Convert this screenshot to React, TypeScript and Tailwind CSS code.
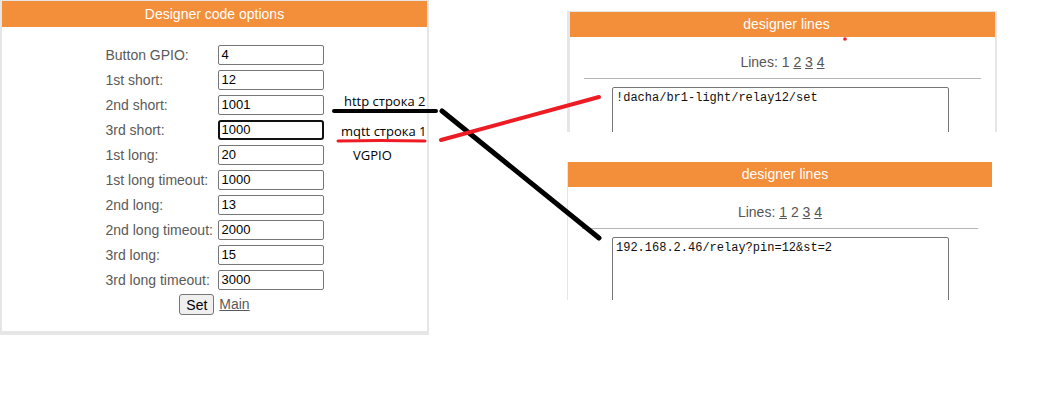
import React from "react";

const ORANGE = "bg-[#f38e3a]";

const FIELDS: { label: string; value: string; focused?: boolean }[] = [
  { label: "Button GPIO:", value: "4" },
  { label: "1st short:", value: "12" },
  { label: "2nd short:", value: "1001" },
  { label: "3rd short:", value: "1000", focused: true },
  { label: "1st long:", value: "20" },
  { label: "1st long timeout:", value: "1000" },
  { label: "2nd long:", value: "13" },
  { label: "2nd long timeout:", value: "2000" },
  { label: "3rd long:", value: "15" },
  { label: "3rd long timeout:", value: "3000" },
];

function LinesNav({ current }: { current: number }) {
  return (
    <p className="text-center text-[14px] leading-[16px] text-[#555]">
      Lines:{" "}
      {[1, 2, 3, 4].map((n) => (
        <React.Fragment key={n}>
          {n === current ? (
            <span>{n}</span>
          ) : (
            <a className="underline">{n}</a>
          )}
          {n < 4 ? " " : ""}
        </React.Fragment>
      ))}
    </p>
  );
}

function LinesBody({
  current,
  text,
  inset,
}: {
  current: number;
  text: string;
  inset: string;
}) {
  return (
    <div className="pt-[17px]">
      <LinesNav current={current} />
      <div className="mx-[14px] mt-[8px] h-px bg-[#b5b5b5]" />
      <div
        className={`${inset} mt-[8px] h-[80px] w-[337px] rounded-[2px] border border-[#767676] bg-white px-[3px] pt-[2px] font-['Liberation_Mono'] text-[12px] leading-[16px] text-[#111]`}
      >
        {text}
      </div>
    </div>
  );
}

export default function App() {
  return (
    <div className="relative h-[400px] w-[1057px] overflow-hidden bg-white font-['Liberation_Sans',Arial,sans-serif]">
      <div className="flex items-start">
        {/* left panel */}
        <div className="h-[335px] w-[429px] border-b-4 border-l-2 border-r-2 border-t border-[#e6e6e6] bg-white">
          <div
            className={`${ORANGE} flex h-[26px] items-center justify-center text-[14px] text-white`}
          >
            Designer code options
          </div>
          <div className="flex flex-col items-center pt-[18px]">
            <div className="flex flex-col gap-[5px]">
              {FIELDS.map((f) => (
                <div key={f.label} className="flex h-[20px] items-center">
                  <span className="w-[112px] text-[14px] text-[#5a5a5a]">
                    {f.label}
                  </span>
                  <div
                    className={
                      f.focused
                        ? "flex h-[20px] w-[106px] items-center rounded-[3px] border-2 border-[#111] px-[2px] text-[13px] text-black"
                        : "flex h-[20px] w-[106px] items-center rounded-[2px] border border-[#767676] px-[3px] text-[13px] text-black"
                    }
                  >
                    {f.value}
                  </div>
                </div>
              ))}
            </div>
            <div className="mt-[4px] flex items-center gap-[5px]">
              <button className="h-[21px] w-[35px] rounded-[3px] border border-[#767676] bg-[#efefef] text-[14px] text-black">
                Set
              </button>
              <a className="text-[14px] text-[#5a5a5a] underline">Main</a>
            </div>
          </div>
        </div>

        {/* right column */}
        <div className="ml-[138px] flex flex-col">
          <div className="mt-[11px] h-[121px] w-[430px] overflow-hidden border-l-[3px] border-r-2 border-t border-[#e6e6e6]">
            <div
              className={`${ORANGE} flex h-[25px] items-center justify-center pl-[8px] text-[14px] text-white`}
            >
              designer lines
            </div>
            <LinesBody
              current={1}
              text="!dacha/br1-light/relay12/set"
              inset="ml-[42px]"
            />
          </div>

          <div className="mt-[30px] h-[138px] w-[425px] overflow-hidden border-l border-[#e6e6e6]">
            <div
              className={`${ORANGE} flex h-[25px] items-center justify-center pl-[10px] text-[14px] text-white`}
            >
              designer lines
            </div>
            <LinesBody
              current={2}
              text="192.168.2.46/relay?pin=12&st=2"
              inset="ml-[44px]"
            />
          </div>
        </div>
      </div>

      {/* hand-drawn annotations */}
      <div className="absolute left-[344px] top-[92px] font-['Open_Sans',sans-serif] text-[13px] font-medium leading-[18px] text-black">
        http строка 2
      </div>
      <div className="absolute left-[341px] top-[122px] font-['Open_Sans',sans-serif] text-[13px] font-medium leading-[18px] text-black">
        mqtt строка 1
      </div>
      <div className="absolute left-[353px] top-[146px] font-['Open_Sans',sans-serif] text-[13px] font-medium leading-[18px] text-black">
        VGPIO
      </div>

      <svg
        className="pointer-events-none absolute inset-0"
        width="1057"
        height="400"
        viewBox="0 0 1057 400"
      >
        <g strokeLinecap="round" fill="none">
          <line x1="334" y1="111" x2="436" y2="111" stroke="#000" strokeWidth="4" />
          <line x1="442" y1="111" x2="599" y2="238" stroke="#000" strokeWidth="5" />
          <path d="M338 141 Q380 140 425 141" stroke="#ed1c24" strokeWidth="3" />
          <line x1="441" y1="140" x2="599" y2="97" stroke="#ed1c24" strokeWidth="4" />
          <circle cx="845" cy="39" r="1.8" fill="#ed1c24" />
        </g>
      </svg>
    </div>
  );
}
